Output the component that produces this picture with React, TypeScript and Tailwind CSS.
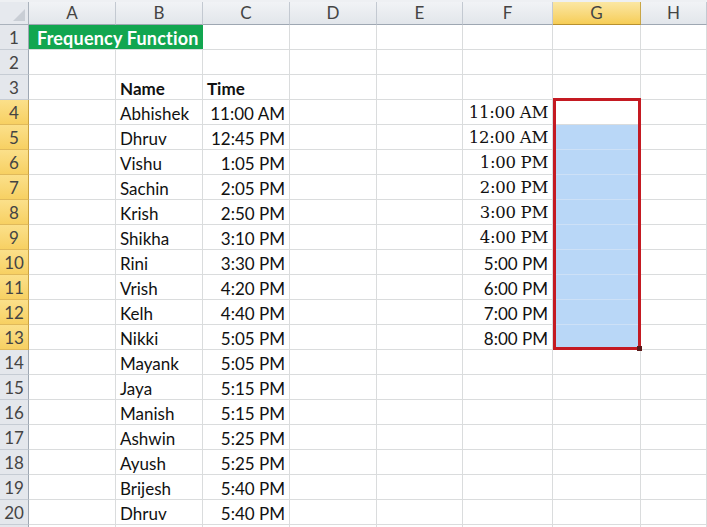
import React from "react";

const COLS = ["A", "B", "C", "D", "E", "F", "G", "H"];

const names: [string, string][] = [
  ["Abhishek", "11:00 AM"],
  ["Dhruv", "12:45 PM"],
  ["Vishu", "1:05 PM"],
  ["Sachin", "2:05 PM"],
  ["Krish", "2:50 PM"],
  ["Shikha", "3:10 PM"],
  ["Rini", "3:30 PM"],
  ["Vrish", "4:20 PM"],
  ["Kelh", "4:40 PM"],
  ["Nikki", "5:05 PM"],
  ["Mayank", "5:05 PM"],
  ["Jaya", "5:15 PM"],
  ["Manish", "5:15 PM"],
  ["Ashwin", "5:25 PM"],
  ["Ayush", "5:25 PM"],
  ["Brijesh", "5:40 PM"],
  ["Dhruv", "5:40 PM"],
];

const bins = [
  "11:00 AM",
  "12:00 AM",
  "1:00 PM",
  "2:00 PM",
  "3:00 PM",
  "4:00 PM",
  "5:00 PM",
  "6:00 PM",
  "7:00 PM",
  "8:00 PM",
];

const sans = "font-['Lato','Liberation_Sans',sans-serif]";

function Corner() {
  return (
    <div className="h-[23px] bg-[#e6e9ee] border-r border-b border-[#aab2bc] relative">
      <svg className="absolute right-[3px] bottom-[3px]" width="12" height="12" viewBox="0 0 12 12">
        <polygon points="12,0 12,12 0,12" fill="#c9ced5" />
      </svg>
    </div>
  );
}

function ColHeader({ label }: { label: string }) {
  const sel = label === "G";
  return (
    <div
      className={`h-[23px] flex items-center justify-center text-[17px] text-[#444] border-r border-b ${sans} ${
        sel
          ? "bg-gradient-to-b from-[#fbe7a3] to-[#f6cd55] border-r-[#c9a646] border-b-[#b8902f]"
          : "bg-gradient-to-b from-[#f1f3f6] to-[#e2e6eb] border-r-[#c3c9d1] border-b-[#9ea7b2]"
      }`}
    >
      {label}
    </div>
  );
}

function RowHeader({ n }: { n?: number }) {
  const sel = n !== undefined && n >= 4 && n <= 13;
  return (
    <div
      className={`h-[25px] flex items-center justify-center pt-[2px] text-[17px] text-[#444] border-b border-r ${sans} ${
        sel
          ? "bg-gradient-to-b from-[#fbe08a] to-[#f7d062] border-b-[#e0b95a] border-r-[#c8a040]"
          : "bg-[#e4e7ec] border-b-[#c6ccd4] border-r-[#9ea7b2]"
      }`}
    >
      {n}
    </div>
  );
}

function Cell({
  children,
  align = "left",
  bold = false,
  serif = false,
  blue = false,
}: {
  children?: React.ReactNode;
  align?: "left" | "right";
  bold?: boolean;
  serif?: boolean;
  blue?: boolean;
}) {
  return (
    <div
      className={`h-[25px] flex items-center px-[4px] pt-[3px] border-r border-b overflow-hidden whitespace-nowrap text-[#111] ${
        blue ? "bg-[#b9d7f7] border-b-[#cde0f6] border-r-[#d9d9d9]" : "bg-white border-[#dadcdd]"
      } ${align === "right" ? "justify-end" : "justify-start"} ${bold ? "font-bold" : ""} ${
        serif
          ? "font-['DejaVu_Serif','Liberation_Serif',serif] text-[16.5px] tracking-[-0.3px] text-[#000]"
          : `${sans} text-[17px]`
      }`}
    >
      {children}
    </div>
  );
}

export default function App() {
  const rows: React.ReactNode[] = [];
  for (let r = 1; r <= 21; r++) {
    rows.push(<RowHeader key={`rh${r}`} n={r <= 20 ? r : undefined} />);
    if (r === 1) {
      rows.push(
        <div
          key="title"
          className={`col-span-2 h-[25px] flex items-center pl-[8px] pt-[2px] bg-[#12a650] text-white font-bold text-[18px] tracking-[0.2px] border-b border-[#dadcdd] ${sans}`}
        >
          Frequency Function
        </div>
      );
      for (let c = 2; c < 8; c++) rows.push(<Cell key={`c${r}-${c}`} />);
      continue;
    }
    for (let c = 0; c < 8; c++) {
      const key = `c${r}-${c}`;
      let content: React.ReactNode = null;
      let align: "left" | "right" = "left";
      let bold = false;
      let serif = false;
      let blue = false;
      if (r === 3 && c === 1) {
        content = "Name";
        bold = true;
      } else if (r === 3 && c === 2) {
        content = "Time";
        bold = true;
      } else if (r >= 4 && r <= 20 && c === 1) {
        content = names[r - 4][0];
      } else if (r >= 4 && r <= 20 && c === 2) {
        content = names[r - 4][1];
        align = "right";
      } else if (r >= 4 && r <= 13 && c === 5) {
        content = bins[r - 4];
        align = "right";
        serif = r <= 9;
      } else if (r >= 5 && r <= 13 && c === 6) {
        blue = true;
      }
      rows.push(
        <Cell key={key} align={align} bold={bold} serif={serif} blue={blue}>
          {content}
        </Cell>
      );
    }
  }

  return (
    <div className="w-[707px] h-[527px] overflow-hidden bg-white relative">
      <div className="h-[2px] bg-[#eef0f3]" />
      <div className="grid grid-cols-[29px_87px_87px_87px_87px_86px_90px_88px_66px]">
        <Corner />
        {COLS.map((c) => (
          <ColHeader key={c} label={c} />
        ))}
        {rows}
      </div>
      <div className="absolute left-[553px] top-[98px] w-[88px] h-[252px] border-[3px] border-[#c41a22] pointer-events-none" />
      <div className="absolute left-[637px] top-[346px] w-[5px] h-[5px] bg-[#5a1a1a]" />
    </div>
  );
}
